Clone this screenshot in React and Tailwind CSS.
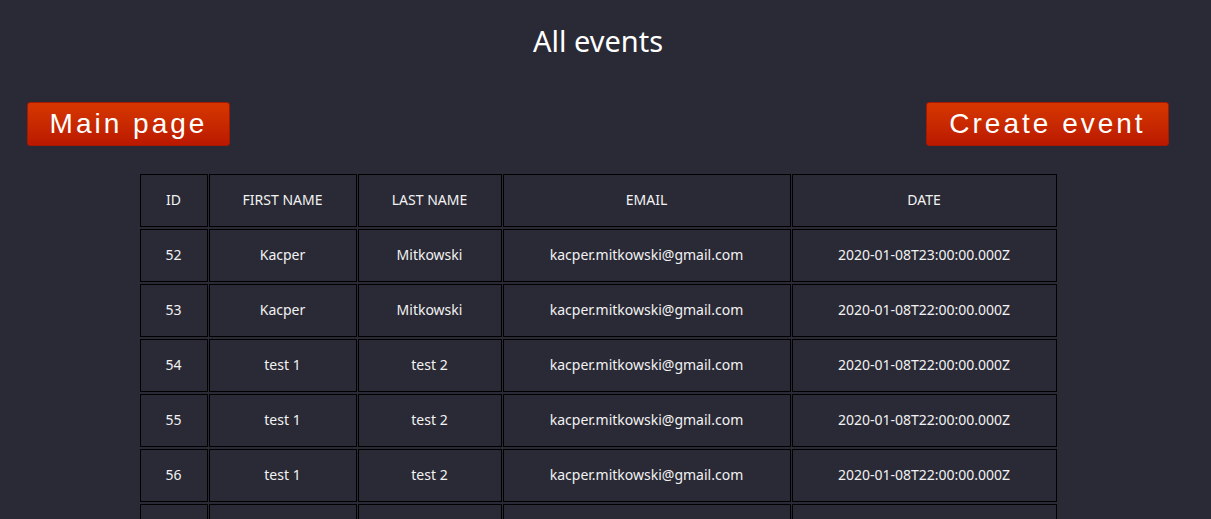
import React from "react";

const events = [
  { id: 52, firstName: "Kacper", lastName: "Mitkowski", email: "kacper.mitkowski@gmail.com", date: "2020-01-08T23:00:00.000Z" },
  { id: 53, firstName: "Kacper", lastName: "Mitkowski", email: "kacper.mitkowski@gmail.com", date: "2020-01-08T22:00:00.000Z" },
  { id: 54, firstName: "test 1", lastName: "test 2", email: "kacper.mitkowski@gmail.com", date: "2020-01-08T22:00:00.000Z" },
  { id: 55, firstName: "test 1", lastName: "test 2", email: "kacper.mitkowski@gmail.com", date: "2020-01-08T22:00:00.000Z" },
  { id: 56, firstName: "test 1", lastName: "test 2", email: "kacper.mitkowski@gmail.com", date: "2020-01-08T22:00:00.000Z" },
  { id: 57, firstName: "test 1", lastName: "test 2", email: "kacper.mitkowski@gmail.com", date: "2020-01-08T22:00:00.000Z" },
];

const cellClass = "border border-black h-[53px] p-0 pb-[2px] text-center align-middle font-normal";

const RedButton = ({ children, className }) => (
  <button
    className={`h-[44px] rounded-[3px] border border-[#a81800] bg-gradient-to-b from-[#d63700] to-[#bb1800] text-white text-[28px] tracking-[3px] leading-none font-['Liberation_Sans',Arial,sans-serif] ${className}`}
  >
    {children}
  </button>
);

const App = () => {
  return (
    <div className="h-screen overflow-hidden bg-[#2a2a36] text-white font-['Noto_Sans',sans-serif]">
      <div className="w-[1196px] pt-[21px]">
        <h1 className="text-center text-[29px] leading-[40px] text-white">All events</h1>

        <div className="flex justify-between items-start mt-[41px] px-[27px]">
          <RedButton className="w-[203px]">Main page</RedButton>
          <RedButton className="w-[243px]">Create event</RedButton>
        </div>

        {/* Events table */}
        <table className="mt-[26px] mx-auto table-fixed border-separate border-spacing-x-[1px] border-spacing-y-[2px] text-[14px] text-[#f2f2f2]">
          <colgroup>
            <col className="w-[68px]" />
            <col className="w-[148px]" />
            <col className="w-[144px]" />
            <col className="w-[288px]" />
            <col className="w-[265px]" />
          </colgroup>
          <thead>
            <tr>
              <th className={cellClass}>ID</th>
              <th className={cellClass}>FIRST NAME</th>
              <th className={cellClass}>LAST NAME</th>
              <th className={cellClass}>EMAIL</th>
              <th className={cellClass}>DATE</th>
            </tr>
          </thead>
          <tbody>
            {events.map((ev) => (
              <tr key={ev.id}>
                <td className={cellClass}>{ev.id}</td>
                <td className={cellClass}>{ev.firstName}</td>
                <td className={cellClass}>{ev.lastName}</td>
                <td className={cellClass}>{ev.email}</td>
                <td className={cellClass}>{ev.date}</td>
              </tr>
            ))}
          </tbody>
        </table>
      </div>
    </div>
  );
};

export default App;
